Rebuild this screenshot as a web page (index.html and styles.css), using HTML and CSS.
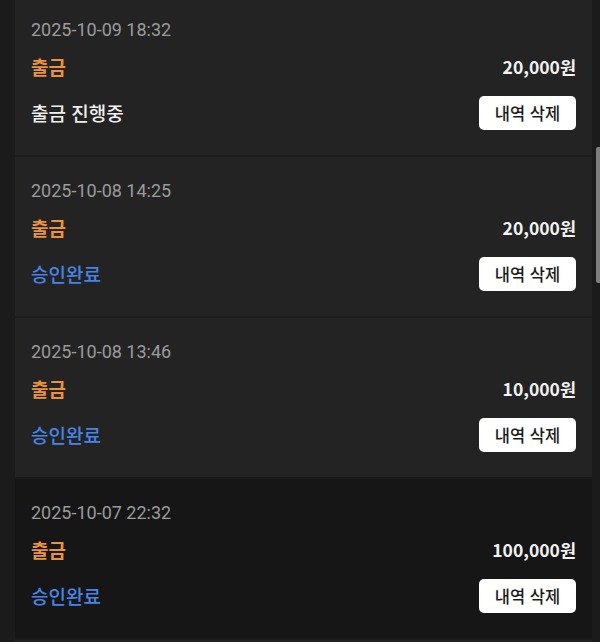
FILE: index.html
```html
<!DOCTYPE html>
<html lang="ko">
<head>
<meta charset="utf-8">
<link rel="stylesheet" href="styles.css">
</head>
<body>
<div class="page">
  <div class="list">
    <div class="card">
      <div class="date">2025-10-09 18:32</div>
      <div class="row row-type">
        <span class="type">출금</span>
        <span class="amount">20,000원</span>
      </div>
      <div class="row row-status">
        <span class="status pending">출금 진행중</span>
        <button class="del">내역 삭제</button>
      </div>
    </div>
    <div class="card">
      <div class="date">2025-10-08 14:25</div>
      <div class="row row-type">
        <span class="type">출금</span>
        <span class="amount">20,000원</span>
      </div>
      <div class="row row-status">
        <span class="status done">승인완료</span>
        <button class="del">내역 삭제</button>
      </div>
    </div>
    <div class="card">
      <div class="date">2025-10-08 13:46</div>
      <div class="row row-type">
        <span class="type">출금</span>
        <span class="amount">10,000원</span>
      </div>
      <div class="row row-status">
        <span class="status done">승인완료</span>
        <button class="del">내역 삭제</button>
      </div>
    </div>
    <div class="card card-dark">
      <div class="date">2025-10-07 22:32</div>
      <div class="row row-type">
        <span class="type">출금</span>
        <span class="amount">100,000원</span>
      </div>
      <div class="row row-status">
        <span class="status done">승인완료</span>
        <button class="del">내역 삭제</button>
      </div>
    </div>
    <div class="card"></div>
  </div>
  <div class="scrollbar"></div>
</div>
</body>
</html>
```

FILE: styles.css
```css
html, body {
  margin: 0;
  padding: 0;
  background: #1b1b1b;
  height: 100%;
  overflow: hidden;
}
.page {
  position: relative;
  height: 642px;
  overflow: hidden;
  padding: 0 8px 0 15px;
}
.list {
  display: flex;
  flex-direction: column;
  gap: 2px;
  margin-top: -4px;
}
.card {
  background: #232323;
  height: 159px;
  box-sizing: border-box;
  padding: 22px 16px 0 16px;
  display: flex;
  flex-direction: column;
}
.card-dark {
  background: #161616;
}
.date {
  font-family: Roboto, "Noto Sans", sans-serif;
  font-size: 18px;
  line-height: 24px;
  color: #9b9b9b;
}
.row {
  display: flex;
  justify-content: space-between;
  align-items: center;
}
.row-type {
  margin-top: 13px;
  height: 24px;
}
.row-status {
  margin-top: 17px;
  height: 34px;
}
.type {
  font-family: "Noto Sans CJK KR", sans-serif;
  font-size: 19px;
  font-weight: 700;
  color: #ea923e;
  line-height: 24px;
}
.amount {
  font-family: "Noto Sans CJK KR", sans-serif;
  font-size: 17.5px;
  font-weight: 700;
  color: #f2f2f2;
  line-height: 24px;
}
.status {
  font-family: "Noto Sans CJK KR", sans-serif;
  font-size: 19px;
  font-weight: 500;
  line-height: 24px;
}
.pending {
  color: #f0f0f0;
}
.done {
  color: #4784e6;
}
.del {
  width: 97px;
  height: 34px;
  border: none;
  border-radius: 5px;
  background: #ffffff;
  color: #1a1a1a;
  font-family: "Noto Sans CJK KR", sans-serif;
  font-size: 16.5px;
  font-weight: 500;
  padding: 0;
}
.scrollbar {
  position: absolute;
  right: 0;
  top: 147px;
  width: 4px;
  height: 136px;
  background: #7d7d7d;
  border-radius: 2px 0 0 2px;
}
```
